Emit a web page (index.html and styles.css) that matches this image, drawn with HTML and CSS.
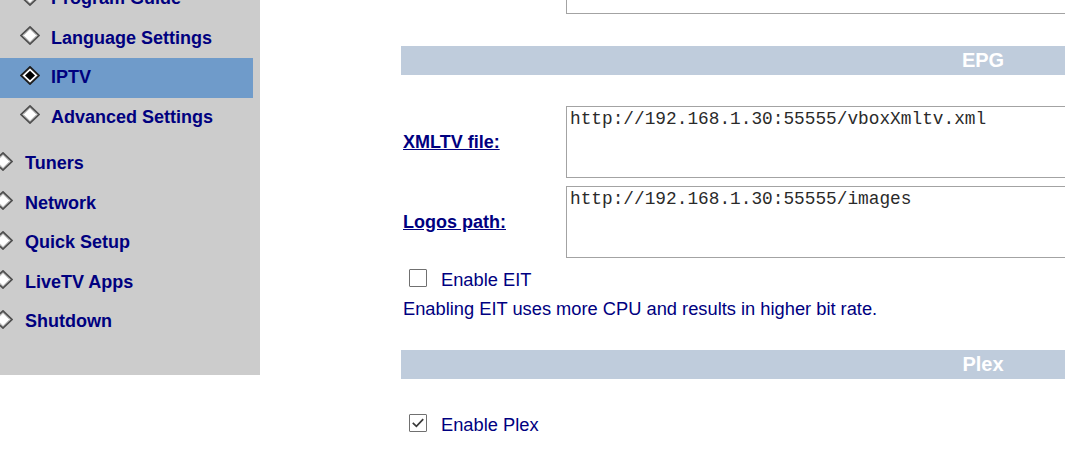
FILE: index.html
```html
<!DOCTYPE html>
<html>
<head>
<meta charset="utf-8">
<link rel="stylesheet" href="styles.css">
</head>
<body>
<div class="page">
  <aside class="sidebar">
    <ul class="nav">
      <li class="item sub"><svg class="dia" viewBox="0 0 20 19"><path d="M10 1 L19 9.5 L10 18 L1 9.5 Z" fill="#fff" stroke="#505050" stroke-width="1.8"/><path d="M10 3.2 L16.6 9.5 L10 15.8 L3.4 9.5 Z" fill="none" stroke="#c4c4c4" stroke-width="1"/></svg><span>Program Guide</span></li>
      <li class="item sub"><svg class="dia" viewBox="0 0 20 19"><path d="M10 1 L19 9.5 L10 18 L1 9.5 Z" fill="#fff" stroke="#505050" stroke-width="1.8"/><path d="M10 3.2 L16.6 9.5 L10 15.8 L3.4 9.5 Z" fill="none" stroke="#c4c4c4" stroke-width="1"/></svg><span>Language Settings</span></li>
      <li class="item sub active"><svg class="dia" viewBox="0 0 20 19"><path d="M10 1 L19 9.5 L10 18 L1 9.5 Z" fill="#fff" stroke="#1e1e1e" stroke-width="1.9"/><path d="M10 4.8 L15 9.5 L10 14.2 L5 9.5 Z" fill="#000"/></svg><span>IPTV</span></li>
      <li class="item sub last"><svg class="dia" viewBox="0 0 20 19"><path d="M10 1 L19 9.5 L10 18 L1 9.5 Z" fill="#fff" stroke="#505050" stroke-width="1.8"/><path d="M10 3.2 L16.6 9.5 L10 15.8 L3.4 9.5 Z" fill="none" stroke="#c4c4c4" stroke-width="1"/></svg><span>Advanced Settings</span></li>
      <li class="item top"><svg class="dia" viewBox="0 0 20 19"><path d="M10 1 L19 9.5 L10 18 L1 9.5 Z" fill="#fff" stroke="#505050" stroke-width="1.8"/><path d="M10 3.2 L16.6 9.5 L10 15.8 L3.4 9.5 Z" fill="none" stroke="#c4c4c4" stroke-width="1"/></svg><span>Tuners</span></li>
      <li class="item top"><svg class="dia" viewBox="0 0 20 19"><path d="M10 1 L19 9.5 L10 18 L1 9.5 Z" fill="#fff" stroke="#505050" stroke-width="1.8"/><path d="M10 3.2 L16.6 9.5 L10 15.8 L3.4 9.5 Z" fill="none" stroke="#c4c4c4" stroke-width="1"/></svg><span>Network</span></li>
      <li class="item top"><svg class="dia" viewBox="0 0 20 19"><path d="M10 1 L19 9.5 L10 18 L1 9.5 Z" fill="#fff" stroke="#505050" stroke-width="1.8"/><path d="M10 3.2 L16.6 9.5 L10 15.8 L3.4 9.5 Z" fill="none" stroke="#c4c4c4" stroke-width="1"/></svg><span>Quick Setup</span></li>
      <li class="item top"><svg class="dia" viewBox="0 0 20 19"><path d="M10 1 L19 9.5 L10 18 L1 9.5 Z" fill="#fff" stroke="#505050" stroke-width="1.8"/><path d="M10 3.2 L16.6 9.5 L10 15.8 L3.4 9.5 Z" fill="none" stroke="#c4c4c4" stroke-width="1"/></svg><span>LiveTV Apps</span></li>
      <li class="item top"><svg class="dia" viewBox="0 0 20 19"><path d="M10 1 L19 9.5 L10 18 L1 9.5 Z" fill="#fff" stroke="#505050" stroke-width="1.8"/><path d="M10 3.2 L16.6 9.5 L10 15.8 L3.4 9.5 Z" fill="none" stroke="#c4c4c4" stroke-width="1"/></svg><span>Shutdown</span></li>
    </ul>
  </aside>
  <main class="main">
    <div class="row first">
      <div class="label"></div>
      <textarea class="field" readonly></textarea>
    </div>
    <div class="bar epg"><span>EPG</span></div>
    <div class="row r1">
      <a class="label" href="#">XMLTV file:</a>
      <textarea class="field" readonly>http://192.168.1.30:55555/vboxXmltv.xml</textarea>
    </div>
    <div class="row r2">
      <a class="label" href="#">Logos path:</a>
      <textarea class="field" readonly>http://192.168.1.30:55555/images</textarea>
    </div>
    <div class="check eit">
      <span class="box"></span>
      <span class="ctext">Enable EIT</span>
    </div>
    <p class="note">Enabling EIT uses more CPU and results in higher bit rate.</p>
    <div class="bar plex"><span>Plex</span></div>
    <div class="check plexcheck">
      <span class="box"><svg viewBox="0 0 15 15"><path d="M2.6 7.4 L6 10.6 L12.4 3.8" fill="none" stroke="#3a3a3a" stroke-width="1.6"/></svg></span>
      <span class="ctext">Enable Plex</span>
    </div>
  </main>
</div>
</body>
</html>
```
FILE: styles.css
```css
html, body {
  margin: 0;
  padding: 0;
  background: #ffffff;
  overflow: hidden;
}
body {
  font-family: "Liberation Sans", Arial, sans-serif;
  color: #000080;
}
.page {
  display: flex;
  align-items: flex-start;
  width: 1600px;
}
.sidebar {
  width: 260px;
  flex: none;
  background: #cccccc;
  height: 375px;
  overflow: hidden;
}
.nav {
  list-style: none;
  margin: -21px 0 0 -7px;
  padding: 0;
  width: 260px;
}
.item {
  display: flex;
  align-items: center;
  height: 39.5px;
  font-weight: bold;
  font-size: 18px;
  color: #00007f;
  gap: 11px;
}
.item.sub {
  padding-left: 27px;
}
.item.last {
  margin-bottom: 7px;
}
.item.top {
  gap: 12px;
}
.item.active {
  background: #6f9bca;
}
.dia {
  width: 20px;
  height: 19px;
  flex: none;
  margin-top: -5px;
}
.main {
  margin-left: 141px;
  width: 1164px;
  flex: none;
}
.row {
  display: flex;
  align-items: center;
}
.row.first {
  margin-top: -58px;
}
.row.r1 {
  margin-top: 31px;
}
.row.r2 {
  margin-top: 8px;
}
.label {
  width: 165px;
  flex: none;
  font-weight: bold;
  font-size: 18px;
  color: #000080;
  text-decoration: underline;
  padding-left: 2px;
  box-sizing: border-box;
}
.field {
  width: 620px;
  height: 72px;
  box-sizing: border-box;
  border: 1px solid #a3a3a3;
  padding: 2px 3px;
  margin: 0;
  font-family: "Liberation Mono", "Courier New", monospace;
  font-size: 17.8px;
  line-height: 21px;
  color: #2a2a2a;
  resize: none;
  overflow: hidden;
  outline: none;
  background: #fff;
}
.bar {
  height: 29px;
  background: #bfccdc;
  display: flex;
  align-items: center;
  justify-content: center;
  color: #ffffff;
  font-weight: bold;
  font-size: 20px;
}
.bar.epg {
  margin-top: 32px;
}
.bar.plex {
  margin-top: 29px;
}
.check {
  display: flex;
  align-items: center;
  height: 24px;
  padding-left: 8px;
  gap: 14px;
  font-size: 18.3px;
}
.check.eit {
  margin-top: 10px;
}
.check.plexcheck {
  margin-top: 34px;
}
.box {
  width: 18px;
  height: 18px;
  box-sizing: border-box;
  border: 1.5px solid #707070;
  background: #fff;
  border-radius: 1px;
  margin-top: -4px;
  display: flex;
}
.box svg {
  width: 100%;
  height: 100%;
}
.ctext {
  color: #000080;
}
.note {
  margin: 5px 0 0 0;
  padding-left: 2px;
  font-size: 18.3px;
  line-height: 24px;
  color: #000080;
}
```
